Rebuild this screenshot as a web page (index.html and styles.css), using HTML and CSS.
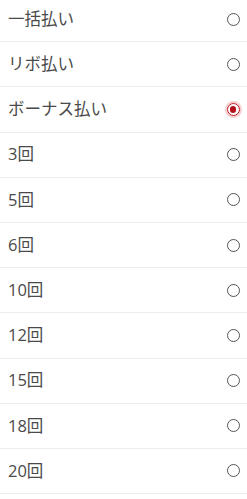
FILE: index.html
```html
<!DOCTYPE html>
<html lang="ja">
<head>
  <meta charset="UTF-8">
  <meta name="viewport" content="width=device-width, initial-scale=1.0">
  <title>支払い方法</title>
  <link rel="stylesheet" href="styles.css">
</head>
<body>
  <ul class="pay-list">
    <li class="pay-list__item"><span class="pay-list__label">一括払い</span><span class="radio"></span></li>
    <li class="pay-list__item"><span class="pay-list__label">リボ払い</span><span class="radio"></span></li>
    <li class="pay-list__item"><span class="pay-list__label">ボーナス払い</span><span class="radio is-checked"></span></li>
    <li class="pay-list__item"><span class="pay-list__label">3回</span><span class="radio"></span></li>
    <li class="pay-list__item"><span class="pay-list__label">5回</span><span class="radio"></span></li>
    <li class="pay-list__item"><span class="pay-list__label">6回</span><span class="radio"></span></li>
    <li class="pay-list__item"><span class="pay-list__label">10回</span><span class="radio"></span></li>
    <li class="pay-list__item"><span class="pay-list__label">12回</span><span class="radio"></span></li>
    <li class="pay-list__item"><span class="pay-list__label">15回</span><span class="radio"></span></li>
    <li class="pay-list__item"><span class="pay-list__label">18回</span><span class="radio"></span></li>
    <li class="pay-list__item"><span class="pay-list__label">20回</span><span class="radio"></span></li>
  </ul>
</body>
</html>
```
FILE: styles.css
```css
* {
  box-sizing: border-box;
}

html,
body {
  margin: 0;
  height: 100%;
  overflow: hidden;
  background: #fff;
}

body {
  font-family: "Open Sans", "Noto Sans CJK JP", sans-serif;
  color: #4a4a4a;
}

.pay-list {
  list-style: none;
  margin: -3px 0 0;
  padding: 0;
}

.pay-list__item {
  display: flex;
  align-items: center;
  justify-content: space-between;
  height: 45.2px;
  padding: 0 6px 0 8px;
  border-bottom: 1.5px solid #ececec;
}

.pay-list__label {
  font-size: 16.5px;
  line-height: 1;
}

.radio {
  position: relative;
  width: 13px;
  height: 13px;
  margin-right: 1.5px;
  border: 1.4px solid #555;
  border-radius: 50%;
}

.radio.is-checked {
  border-color: #c8161d;
  box-shadow: 0 0 0 2px #f6cfd2;
}

.radio.is-checked::after {
  content: "";
  position: absolute;
  left: 50%;
  top: 50%;
  width: 6.5px;
  height: 6.5px;
  margin: -3.25px 0 0 -3.25px;
  border-radius: 50%;
  background: #b3111a;
}
```
